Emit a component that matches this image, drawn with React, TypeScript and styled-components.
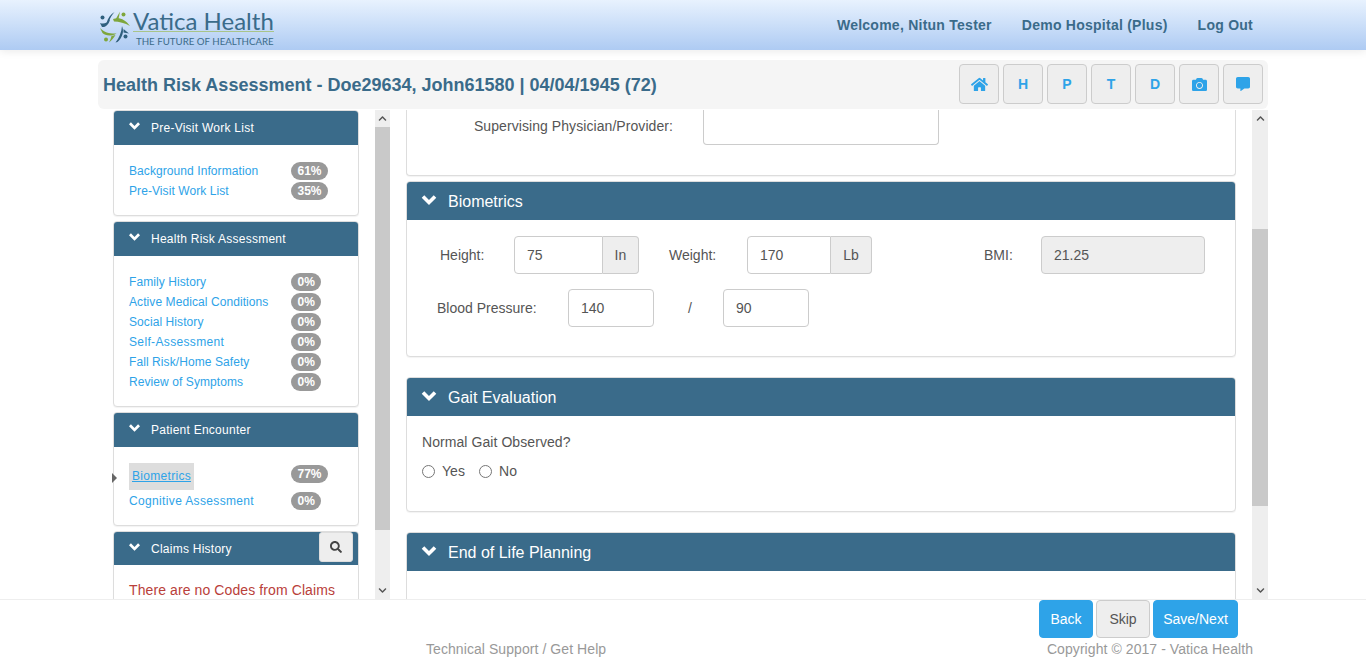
import React from 'react';
import styled, { createGlobalStyle } from 'styled-components';
import { FaCamera, FaChevronDown, FaChevronUp, FaCommentAlt, FaHome, FaSearch } from 'react-icons/fa';

const GlobalStyle = createGlobalStyle`
    html, body {
        margin: 0;
        height: 100%;
        overflow: hidden;
        background: #fff;
        font-family: "Liberation Sans", Arial, sans-serif;
        font-size: 14px;
        letter-spacing: .07px;
        color: #555;
    }
`;

const Page = styled.div`
    height: 669px;
    display: flex;
    flex-direction: column;
`;

const Header = styled.header`
    flex: 0 0 50px;
    background: linear-gradient(#e8f2fe, #aecbf3);
    box-shadow: 0 2px 8px rgba(0, 0, 0, .08);
`;

const HeaderInner = styled.div`
    width: 1170px;
    height: 50px;
    margin: 0 auto;
    display: flex;
    align-items: center;
    justify-content: space-between;
    padding: 0 15px 0 2px;
    box-sizing: border-box;
`;

const Logo = styled.div`
    display: flex;
    align-items: flex-start;
    margin-top: 6px;
`;

const LogoText = styled.div`
    display: flex;
    flex-direction: column;
    color: #3a6b8a;
    font-family: Lato, sans-serif;
    letter-spacing: 0;
    margin-left: -1px;
`;

const LogoName = styled.div`
    font-size: 24px;
    line-height: 24px;
    height: 22px;
    border-bottom: 1px solid #a9c48a;
    white-space: nowrap;
`;

const LogoTag = styled.div`
    font-size: 9.7px;
    line-height: 12px;
    margin: 3px 0 0 3px;
    white-space: nowrap;
`;

const Nav = styled.nav`
    display: flex;
    gap: 30px;
`;

const NavLink = styled.span`
    color: #3a6b8a;
    font-weight: bold;
    letter-spacing: .25px;
`;

const Container = styled.div`
    width: 1170px;
    margin: 0 auto;
    flex: 1;
    min-height: 0;
    display: flex;
    flex-direction: column;
`;

const TitleBar = styled.div`
    margin-top: 10px;
    flex: 0 0 49px;
    display: flex;
    align-items: flex-start;
    justify-content: space-between;
    padding: 4px 5px 0;
    box-sizing: border-box;
    background: #f5f5f5;
    border-radius: 6px;
`;

const Title = styled.h1`
    margin: 0;
    font-size: 18px;
    line-height: 42px;
    font-weight: bold;
    letter-spacing: 0;
    color: #3a6b8a;
`;

const Tools = styled.div`
    display: flex;
    gap: 4px;
`;

const ToolButton = styled.button`
    width: 40px;
    height: 40px;
    padding: 0;
    display: flex;
    align-items: center;
    justify-content: center;
    font: bold 14px "Liberation Sans", sans-serif;
    color: #2ea3e8;
    background: #eee;
    border: 1px solid #ccc;
    border-radius: 4px;
`;

const Columns = styled.div`
    margin-top: 1px;
    flex: 1;
    min-height: 0;
    display: flex;
    gap: 16px;
`;

const Column = styled.div<{ $width: number }>`
    width: ${p => p.$width}px;
    display: flex;
    gap: 16px;
    min-height: 0;
`;

const Scroller = styled.div`
    flex: 1;
    min-width: 0;
    overflow: hidden;
`;

const Track = styled.div<{ $width: number }>`
    flex: 0 0 ${p => p.$width}px;
    background: #eee;
    display: flex;
    flex-direction: column;
    color: #555;
`;

const TrackArrow = styled.div`
    flex: 0 0 17px;
    display: flex;
    align-items: center;
    justify-content: center;
`;

const TrackFill = styled.div`
    flex: 1;
`;

const Thumb = styled.div<{ $top: number; $size: number }>`
    margin-top: ${p => p.$top}px;
    height: ${p => p.$size}px;
    background: #c9c9c9;
`;

const Side = styled(Scroller)`
    padding-left: 15px;
`;

const Panel = styled.section<{ $gap?: number }>`
    background: #fff;
    border: 1px solid #ddd;
    border-radius: 4px;
    box-shadow: 0 1px 1px rgba(0, 0, 0, .05);
    margin-bottom: ${p => p.$gap ?? 5}px;
`;

const PanelHead = styled.div<{ $big?: boolean; $slim?: boolean }>`
    position: relative;
    height: ${p => (p.$big ? 38 : p.$slim ? 33 : 34)}px;
    display: flex;
    align-items: center;
    gap: 11px;
    padding-left: ${p => (p.$big ? 14 : 15)}px;
    border-radius: 3px 3px 0 0;
    background: #3a6b8a;
    color: #fff;
    font-size: ${p => (p.$big ? 16 : 12)}px;
    letter-spacing: ${p => (p.$big ? 0 : .25)}px;
`;

const HeadText = styled.span<{ $big?: boolean }>`
    margin-top: ${p => (p.$big ? 2 : 0)}px;
`;

const Chevron = styled.svg<{ $big?: boolean }>`
    width: ${p => (p.$big ? 16 : 11)}px;
    height: ${p => (p.$big ? 10 : 8)}px;
    margin-top: -${p => (p.$big ? 2 : 4)}px;
    fill: #fff;
`;

const SearchButton = styled.button`
    position: absolute;
    top: 0;
    right: 5px;
    width: 34px;
    height: 30px;
    padding: 0;
    display: flex;
    align-items: center;
    justify-content: center;
    color: #444;
    background: #eee;
    border: 1px solid #ddd;
    border-radius: 3px;
`;

const SideBody = styled.div<{ $open?: boolean }>`
    padding: ${p => (p.$open ? '15px 15px 40px' : '16px 15px 14px')};
`;

const Row = styled.div<{ $tall?: boolean }>`
    position: relative;
    height: ${p => (p.$tall ? 28 : 20)}px;
    display: grid;
    grid-template-columns: 162px auto;
    justify-content: start;
    align-items: center;
    font-size: 12px;
    color: #2ea3e8;
`;

const LinkName = styled.span<{ $wide?: boolean }>`
    letter-spacing: ${p => (p.$wide ? .35 : .08)}px;
    white-space: nowrap;
`;

const Badge = styled.span<{ $raised?: boolean }>`
    justify-self: start;
    align-self: ${p => (p.$raised ? 'start' : 'center')};
    margin-top: ${p => (p.$raised ? 2 : 0)}px;
    height: 18px;
    padding: 0 6.5px;
    line-height: 18px;
    color: #fff;
    font-weight: bold;
    letter-spacing: 0;
    background: #999;
    border-radius: 9px;
`;

const Current = styled.a`
    justify-self: start;
    align-self: start;
    height: 27px;
    padding: 0 3px;
    line-height: 27px;
    background: #ddd;
    color: #2ea3e8;
    letter-spacing: .3px;
    text-decoration: underline;
`;

const Marker = styled.i`
    position: absolute;
    left: -17px;
    top: 10px;
    border-left: 5px solid #666;
    border-top: 5px solid transparent;
    border-bottom: 5px solid transparent;
`;

const Notice = styled.p`
    margin: 0;
    color: #b9403a;
    font-size: 14px;
    line-height: 20px;
    letter-spacing: .1px;
    white-space: nowrap;
`;

const CutPanel = styled(Panel)`
    border-top: 0;
    border-radius: 0 0 4px 4px;
    height: 65px;
    display: flex;
    gap: 30px;
`;

const CutLabel = styled.label`
    width: 266px;
    height: 33px;
    line-height: 33px;
    text-align: right;
`;

const CutInput = styled.div`
    width: 236px;
    height: 35px;
    box-sizing: border-box;
    background: #fff;
    border: 1px solid #ccc;
    border-top: 0;
    border-radius: 0 0 4px 4px;
`;

const FormBody = styled.div`
    padding: 16px 0 29px;
    display: flex;
    flex-direction: column;
    gap: 15px;
`;

const FormRow = styled.div<{ $inset: number }>`
    display: flex;
    align-items: center;
    padding-left: ${p => p.$inset}px;
`;

const FieldLabel = styled.label<{ $width: number; $after?: number }>`
    width: ${p => p.$width}px;
    margin-left: ${p => p.$after ?? 0}px;
    letter-spacing: 0;
    flex: none;
`;

const Field = styled.input<{ $width: number }>`
    width: ${p => p.$width}px;
    height: 38px;
    box-sizing: border-box;
    padding: 0 12px;
    font: 14px "Liberation Sans", sans-serif;
    color: #555;
    background: #fff;
    border: 1px solid #ccc;
    border-radius: 4px;
    outline: none;
    &:disabled {
        background: #eee;
    }
`;

const Group = styled.div`
    display: flex;
    ${Field} {
        border-radius: 4px 0 0 4px;
    }
`;

const Addon = styled.span<{ $width: number }>`
    width: ${p => p.$width}px;
    height: 38px;
    box-sizing: border-box;
    line-height: 36px;
    text-align: center;
    background: #eee;
    border: 1px solid #ccc;
    border-left: 0;
    border-radius: 0 4px 4px 0;
`;

const Slash = styled.span`
    width: 69px;
    padding-left: 3px;
    box-sizing: border-box;
    text-align: center;
    flex: none;
`;

const GaitBody = styled.div`
    padding: 16px 15px 30px;
`;

const Question = styled.div`
    line-height: 20px;
    margin-bottom: 9px;
`;

const Radios = styled.div`
    display: flex;
    gap: 14px;
    line-height: 20px;
`;

const Radio = styled.label`
    display: flex;
    align-items: center;
    gap: 7px;
    input {
        width: 13px;
        height: 13px;
        margin: 0;
    }
`;

const Footer = styled.footer`
    flex: 0 0 69px;
    border-top: 1px solid #eee;
    background: #fff;
`;

const FooterInner = styled.div`
    width: 1170px;
    margin: 0 auto;
`;

const Actions = styled.div`
    display: flex;
    justify-content: flex-end;
    gap: 3px;
    padding-right: 30px;
`;

const Action = styled.button<{ $primary?: boolean; $width: number }>`
    width: ${p => p.$width}px;
    height: 38px;
    padding: 0;
    font: 14px "Liberation Sans", sans-serif;
    color: ${p => (p.$primary ? '#fff' : '#555')};
    background: ${p => (p.$primary ? '#2ea3e8' : '#eee')};
    border: 1px solid ${p => (p.$primary ? '#2ea3e8' : '#ccc')};
    border-radius: 4px;
`;

const FooterText = styled.div`
    display: flex;
    justify-content: space-between;
    padding: 1px 15px 0 328px;
    line-height: 20px;
    color: #999;
`;

const Bar = ({ top, thumb, width }: { top: number; thumb: number; width: number }) => (
    <Track $width={width}>
        <TrackArrow><FaChevronUp size={9} /></TrackArrow>
        <Thumb $top={top} $size={thumb} />
        <TrackFill />
        <TrackArrow><FaChevronDown size={9} /></TrackArrow>
    </Track>
);

const Down = ({ big }: { big?: boolean }) => (
    <Chevron $big={big} viewBox="0 0 16 11">
        <path d="M0 3 L2.8 0.2 L8 5.4 L13.2 0.2 L16 3 L8 11 Z" />
    </Chevron>
);

const SideLink = ({ name, value, wide }: { name: string; value: string; wide?: boolean }) => (
    <Row>
        <LinkName $wide={wide}>{name}</LinkName>
        <Badge>{value}</Badge>
    </Row>
);

const LogoMark = () => (
    <svg width="34" height="36" viewBox="0 0 34 36">
        {/* top left figure */}
        <circle cx="2.5" cy="8.5" r="2" fill="#2f5f7d" />
        <path d="M0 14 C4 15.5 7 14 10 10.5 C9 15 6 18.5 2 18 Z" fill="#2f5f7d" />
        <path d="M14.5 3 C10.5 5.5 8 9 6.5 14 L9 12.5 C10 9 12 6 14.5 3 Z" fill="#2f5f7d" />
        {/* top right figure */}
        <circle cx="23.5" cy="5.5" r="2" fill="#7ea63c" />
        <path d="M13 10 C19 8 25 10 30 17 C25 14 19 12.5 14 12.5 Z" fill="#7ea63c" />
        <path d="M20 2.5 L15.5 10.5 L18.5 10 Z" fill="#7ea63c" />
        {/* bottom left figure */}
        <path d="M0 19 C5 24 11 25 16.5 24.5 C12 27.5 5 27 2.5 24 Z" fill="#7ea63c" />
        <circle cx="6" cy="30.5" r="2" fill="#7ea63c" />
        <path d="M9 33.5 C11.5 31.5 13.5 29 15.5 26 L11.5 27 C11 29.5 10 31.5 9 33.5 Z" fill="#7ea63c" />
        {/* bottom right figure */}
        <path d="M15.5 33.5 C19 29 21.5 23.5 22 17 C24.5 23 22 29 17.5 33 Z" fill="#2f5f7d" />
        <circle cx="25.5" cy="27.5" r="2" fill="#2f5f7d" />
        <path d="M23.5 20 L29 24.5 L23.5 23.5 Z" fill="#2f5f7d" />
    </svg>
);

export default function App() {
    return (
        <Page>
            <GlobalStyle />
            <Header>
                <HeaderInner>
                    <Logo>
                        <LogoMark />
                        <LogoText>
                            <LogoName>Vatica Health</LogoName>
                            <LogoTag>THE FUTURE OF HEALTHCARE</LogoTag>
                        </LogoText>
                    </Logo>
                    <Nav>
                        <NavLink>Welcome, Nitun Tester</NavLink>
                        <NavLink>Demo Hospital (Plus)</NavLink>
                        <NavLink>Log Out</NavLink>
                    </Nav>
                </HeaderInner>
            </Header>

            <Container>
                <TitleBar>
                    <Title>Health Risk Assessment - Doe29634, John61580 | 04/04/1945 (72)</Title>
                    <Tools>
                        <ToolButton><FaHome size={17} /></ToolButton>
                        <ToolButton>H</ToolButton>
                        <ToolButton>P</ToolButton>
                        <ToolButton>T</ToolButton>
                        <ToolButton>D</ToolButton>
                        <ToolButton><FaCamera size={15} /></ToolButton>
                        <ToolButton><FaCommentAlt size={14} /></ToolButton>
                    </Tools>
                </TitleBar>

                <Columns>
                    <Column $width={292}>
                        <Side>
                            <Panel>
                                <PanelHead><Down /><HeadText>Pre-Visit Work List</HeadText></PanelHead>
                                <SideBody>
                                    <SideLink name="Background Information" value="61%" />
                                    <SideLink name="Pre-Visit Work List" value="35%" />
                                </SideBody>
                            </Panel>
                            <Panel>
                                <PanelHead><Down /><HeadText>Health Risk Assessment</HeadText></PanelHead>
                                <SideBody>
                                    <SideLink name="Family History" value="0%" />
                                    <SideLink name="Active Medical Conditions" value="0%" />
                                    <SideLink name="Social History" value="0%" />
                                    <SideLink name="Self-Assessment" value="0%" wide />
                                    <SideLink name="Fall Risk/Home Safety" value="0%" />
                                    <SideLink name="Review of Symptoms" value="0%" />
                                </SideBody>
                            </Panel>
                            <Panel>
                                <PanelHead><Down /><HeadText>Patient Encounter</HeadText></PanelHead>
                                <SideBody>
                                    <Row $tall>
                                        <Marker />
                                        <Current>Biometrics</Current>
                                        <Badge $raised>77%</Badge>
                                    </Row>
                                    <SideLink name="Cognitive Assessment" value="0%" wide />
                                </SideBody>
                            </Panel>
                            <Panel>
                                <PanelHead $slim>
                                    <Down /><HeadText>Claims History</HeadText>
                                    <SearchButton><FaSearch size={12} /></SearchButton>
                                </PanelHead>
                                <SideBody $open>
                                    <Notice>There are no Codes from Claims</Notice>
                                </SideBody>
                            </Panel>
                        </Side>
                        <Bar top={0} thumb={403} width={15} />
                    </Column>

                    <Column $width={862}>
                        <Scroller>
                            <CutPanel>
                                <CutLabel>Supervising Physician/Provider:</CutLabel>
                                <CutInput />
                            </CutPanel>
                            <Panel $gap={20}>
                                <PanelHead $big><Down big /><HeadText $big>Biometrics</HeadText></PanelHead>
                                <FormBody>
                                    <FormRow $inset={33}>
                                        <FieldLabel $width={74}>Height:</FieldLabel>
                                        <Group>
                                            <Field $width={89} defaultValue="75" />
                                            <Addon $width={36}>In</Addon>
                                        </Group>
                                        <FieldLabel $width={78} $after={30}>Weight:</FieldLabel>
                                        <Group>
                                            <Field $width={84} defaultValue="170" />
                                            <Addon $width={41}>Lb</Addon>
                                        </Group>
                                        <FieldLabel $width={57} $after={112}>BMI:</FieldLabel>
                                        <Field $width={164} defaultValue="21.25" disabled />
                                    </FormRow>
                                    <FormRow $inset={30}>
                                        <FieldLabel $width={131}>Blood Pressure:</FieldLabel>
                                        <Field $width={86} defaultValue="140" />
                                        <Slash>/</Slash>
                                        <Field $width={86} defaultValue="90" />
                                    </FormRow>
                                </FormBody>
                            </Panel>
                            <Panel $gap={20}>
                                <PanelHead $big><Down big /><HeadText $big>Gait Evaluation</HeadText></PanelHead>
                                <GaitBody>
                                    <Question>Normal Gait Observed?</Question>
                                    <Radios>
                                        <Radio><input type="radio" name="gait" />Yes</Radio>
                                        <Radio><input type="radio" name="gait" />No</Radio>
                                    </Radios>
                                </GaitBody>
                            </Panel>
                            <Panel>
                                <PanelHead $big><Down big /><HeadText $big>End of Life Planning</HeadText></PanelHead>
                                <GaitBody />
                            </Panel>
                        </Scroller>
                        <Bar top={102} thumb={277} width={16} />
                    </Column>
                </Columns>
            </Container>

            <Footer>
                <FooterInner>
                    <Actions>
                        <Action $primary $width={54}>Back</Action>
                        <Action $width={54}>Skip</Action>
                        <Action $primary $width={85}>Save/Next</Action>
                    </Actions>
                    <FooterText>
                        <span>Technical Support / Get Help</span>
                        <span>Copyright © 2017 - Vatica Health</span>
                    </FooterText>
                </FooterInner>
            </Footer>
        </Page>
    );
}
